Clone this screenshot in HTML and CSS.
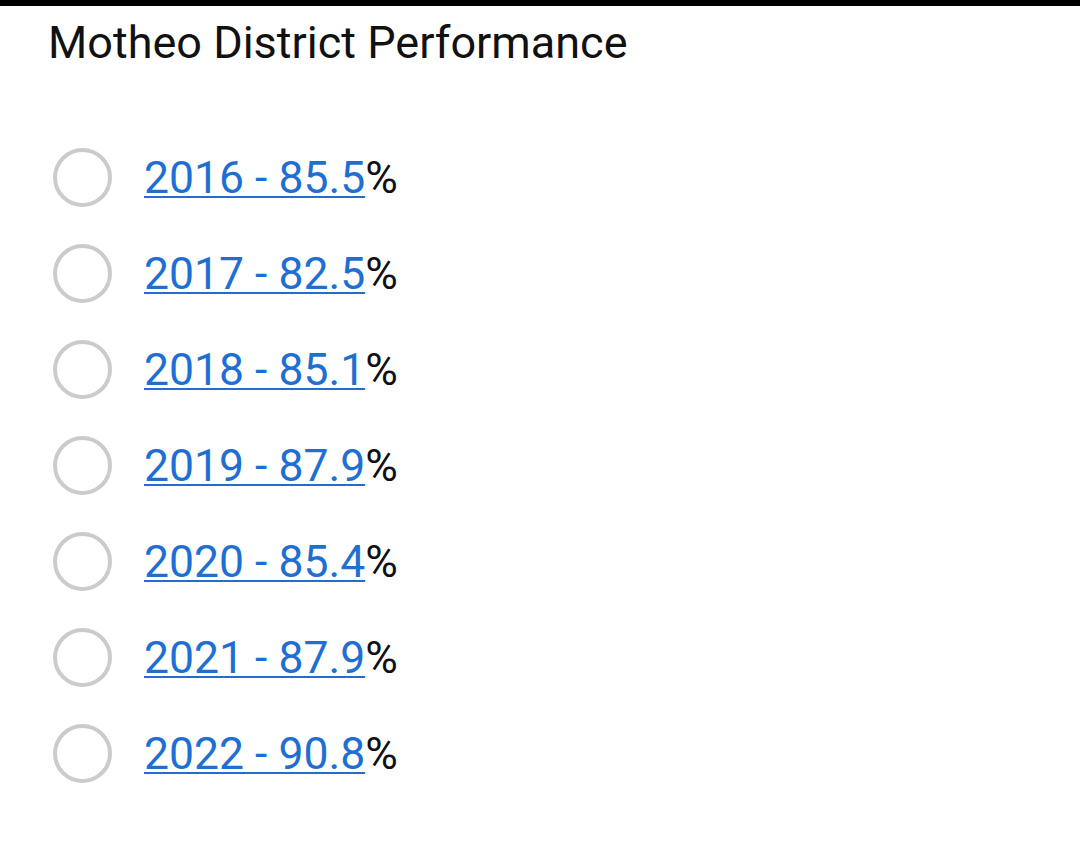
FILE: index.html
```html
<!DOCTYPE html>
<html>
<head>
<meta charset="utf-8">
<link rel="stylesheet" href="styles.css">
</head>
<body>
<div class="topbar"></div>
<h1 class="title">Motheo District Performance</h1>
<ul class="options">
  <li class="option"><span class="radio"></span><span class="label"><a href="#">2016 - 85.5</a>%</span></li>
  <li class="option"><span class="radio"></span><span class="label"><a href="#">2017 - 82.5</a>%</span></li>
  <li class="option"><span class="radio"></span><span class="label"><a href="#">2018 - 85.1</a>%</span></li>
  <li class="option"><span class="radio"></span><span class="label"><a href="#">2019 - 87.9</a>%</span></li>
  <li class="option"><span class="radio"></span><span class="label"><a href="#">2020 - 85.4</a>%</span></li>
  <li class="option"><span class="radio"></span><span class="label"><a href="#">2021 - 87.9</a>%</span></li>
  <li class="option"><span class="radio"></span><span class="label"><a href="#">2022 - 90.8</a>%</span></li>
</ul>
</body>
</html>
```
FILE: styles.css
```css
html, body {
  margin: 0;
  padding: 0;
  background: #ffffff;
  font-family: Roboto, "Noto Sans", sans-serif;
  color: #111111;
}
.topbar {
  height: 6px;
  background: #000000;
}
.title {
  margin: 14px 0 0 48px;
  font-size: 45px;
  font-weight: 400;
  line-height: 46px;
  color: #111111;
}
.options {
  list-style: none;
  margin: 82px 0 0 0;
  padding: 0 0 0 53px;
  display: flex;
  flex-direction: column;
  gap: 37px;
}
.option {
  display: flex;
  align-items: center;
  height: 59px;
  gap: 32px;
}
.radio {
  width: 51px;
  height: 51px;
  border: 4px solid #cbcbcb;
  border-radius: 50%;
  flex: none;
}
.label {
  font-size: 44.5px;
  line-height: 52px;
  color: #111111;
}
.label a {
  color: #1f6fd3;
  text-decoration: underline;
  text-decoration-thickness: 2px;
  text-underline-offset: 3px;
}
```
